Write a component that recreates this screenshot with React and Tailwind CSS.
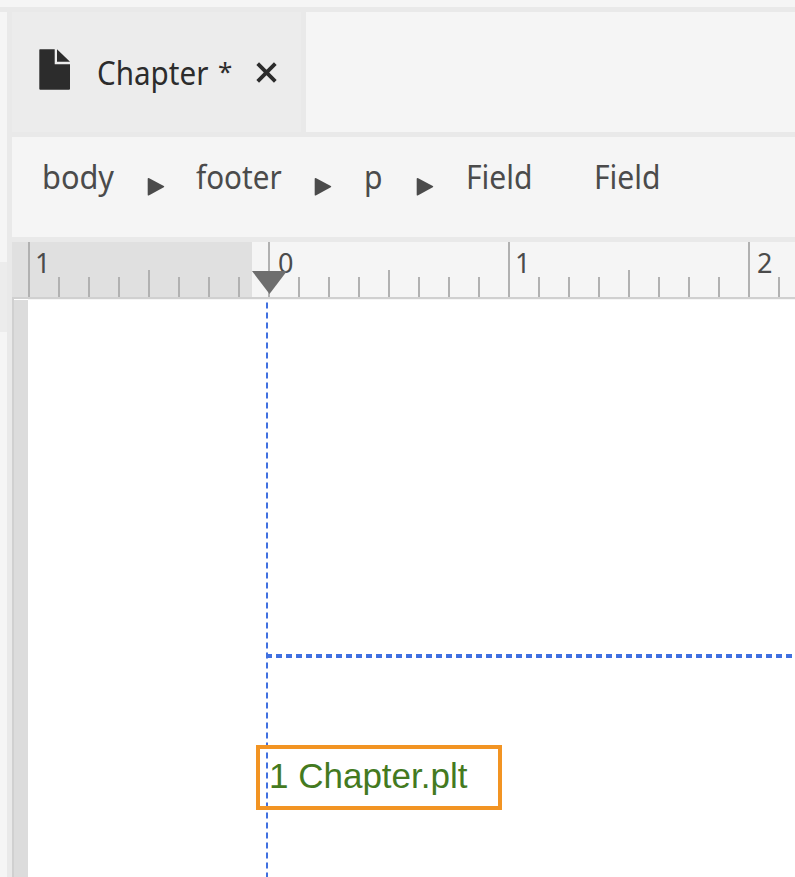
import React from "react";

const minorTicks = Array.from({ length: 26 }, (_, i) => i);
const rulerLabels = {
  0: { text: "1", indent: "pl-[5px]" },
  8: { text: "0", indent: "pl-2" },
  16: { text: "1", indent: "pl-[5px]" },
  24: { text: "2", indent: "pl-[7px]" },
};

function Arrow() {
  return (
    <svg className="mt-10 h-5 w-[18px] shrink-0" viewBox="0 0 18 20" fill="#4b4b4b">
      <path d="M0.7 1.8Q0.7 0.5 2.2 1.2L16.8 9.1Q17.8 9.7 16.8 10.3L2.2 18.3Q0.7 19 0.7 17.7Z" />
    </svg>
  );
}

function Crumb({ className, scale = "scale-x-[0.94]", children }) {
  return (
    <div className={`h-full shrink-0 pt-[18px] text-[32px] leading-[44px] text-[#4b4b4b] ${className}`}>
      <span className={`inline-block origin-left whitespace-nowrap ${scale}`}>{children}</span>
    </div>
  );
}

function Tab() {
  return (
    <div className="flex h-[120px] w-[294px] shrink-0 border-r-[5px] border-[#e9e9e9] bg-[#ececec] text-[#2c2c2c]">
      <svg className="mt-[37px] ml-[27px] h-[41px] w-[31px] shrink-0" viewBox="0 0 31 41" fill="#2c2c2c">
        <path d="M1 0.3H15.7V15.3H31V39.7Q31 40.7 30 40.7H1.3Q0.3 40.7 0.3 39.7V1Q0.3 0.3 1 0.3Z" />
        <path d="M18 0.3L31 12.8H18Z" />
      </svg>
      <div className="mt-[39px] ml-[27px] w-[120px] shrink-0 text-[32px] leading-[44px]">
        <span className="inline-block origin-left scale-x-[0.925] whitespace-nowrap">Chapter</span>
      </div>
      <div className="mt-[37px] w-[39px] shrink-0 pl-px text-[26px] leading-[44px]">*</div>
      <svg className="mt-[50px] h-[21px] w-[21px] shrink-0" viewBox="0 0 21 21" stroke="#2c2c2c" strokeWidth="3.8">
        <path d="M1.7 1.7L19.3 19.3M19.3 1.7L1.7 19.3" />
      </svg>
    </div>
  );
}

function Ruler() {
  return (
    <div className="relative h-[57px] shrink-0 overflow-hidden border-b-2 border-[#d0d0d0] bg-[linear-gradient(to_right,#e0e0e0_240px,#f5f5f5_240px)]">
      <div className="ml-4 flex h-full items-end">
        {minorTicks.map((i) => (
          <div
            key={i}
            className={`w-[30px] shrink-0 border-l-2 border-[#b1b1b1] ${i % 8 === 0 ? "h-full" : i % 4 === 0 ? "h-[27px]" : "h-5"}`}
          >
            {rulerLabels[i] && (
              <span className={`block pt-[5px] text-[27px] leading-8 text-[#4b4b4b] ${rulerLabels[i].indent}`}>
                {rulerLabels[i].text}
              </span>
            )}
          </div>
        ))}
      </div>
      <svg className="absolute top-[29px] left-[240px] h-[23px] w-[35px]" viewBox="0 0 35 23" fill="#6e6e6e">
        <path d="M0 0H35L17.5 23Z" />
      </svg>
    </div>
  );
}

function PageCanvas() {
  return (
    <div className="flex min-h-0 flex-1 border-l-2 border-[#d0d0d0] bg-white">
      <div className="mt-px w-3.5 shrink-0 bg-[#dcdcdc]" />
      <div className="relative flex-1 overflow-hidden border-t border-[#f5f5f5]">
        <svg className="absolute top-0 left-0 h-[577px] w-[767px]" fill="none" stroke="#4070e0">
          <path d="M239 2.5V577" strokeWidth="2" strokeDasharray="6 4" />
          <path d="M238 356H767" strokeWidth="4" strokeDasharray="6 4" />
        </svg>
        <div className="absolute top-[445px] left-[228px] h-[65px] w-[246px] border-4 border-[#f29423] pl-[9px] font-['Liberation_Sans',Arial,sans-serif] text-[35px] leading-[54px] whitespace-nowrap text-[#447a1f]">
          1 Chapter.plt
        </div>
      </div>
    </div>
  );
}

export default function App() {
  return (
    <div className="flex h-[877px] w-[795px] flex-col overflow-hidden bg-[#f5f5f5] font-['Noto_Sans',sans-serif]">
      <div className="h-3 shrink-0 border-b-[5px] border-[#e9e9e9]" />
      <div className="flex min-h-0 flex-1">
        <aside className="w-3 shrink-0 border-r-[5px] border-[#e9e9e9] pt-[250px]">
          <div className="h-[70px] bg-[#ececec]" />
        </aside>
        <main className="flex min-w-0 flex-1 flex-col">
          <div className="flex h-[125px] shrink-0 border-b-[5px] border-[#e9e9e9]">
            <Tab />
          </div>
          <nav className="flex h-[105px] shrink-0 border-b-[5px] border-[#e9e9e9] pl-[30px]">
            <Crumb className="w-[105px]" scale="scale-x-[0.96]">body</Crumb>
            <Arrow />
            <Crumb className="ml-[31px] w-[118px]" scale="scale-x-[0.925]">footer</Crumb>
            <Arrow />
            <Crumb className="ml-8 w-[52px]">p</Crumb>
            <Arrow />
            <Crumb className="ml-8 w-[128px]">Field</Crumb>
            <Crumb className="w-[128px]">Field</Crumb>
          </nav>
          <Ruler />
          <PageCanvas />
        </main>
      </div>
    </div>
  );
}
